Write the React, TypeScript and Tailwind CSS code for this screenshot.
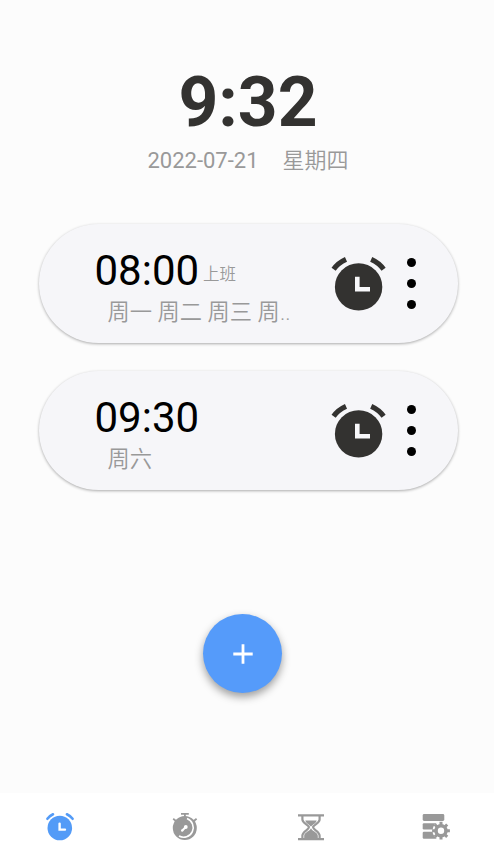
import React from "react";

function AlarmIcon({ className }: { className?: string }) {
  return (
    <svg viewBox="0 0 66 66" className={className}>
      <circle cx="33.6" cy="36.9" r="23.7" fill="currentColor" />
      <path d="M8.6 19.3Q13 13 21 9.4" fill="none" stroke="currentColor" strokeWidth="5" />
      <path d="M46.2 9.4Q54.2 13 58.6 19.3" fill="none" stroke="currentColor" strokeWidth="5" />
      <path d="M30 26.8h4.6v10.3H45v4.4H30z" fill="#f8f8fa" />
    </svg>
  );
}

function NavAlarmIcon() {
  return (
    <svg viewBox="0 0 30 30" className="h-[30px] w-[30px]" fill="none">
      <circle cx="14.8" cy="17" r="12.3" fill="#539bf7" />
      <path d="M2.4 7.8Q4.8 4.8 8 3.3M21.9 3.3Q25.2 4.8 27.6 7.8" stroke="#539bf7" strokeWidth="2.6" strokeLinecap="round" />
      <path d="M14.6 12.6v6h5.4" stroke="#fff" strokeWidth="2.4" strokeLinecap="round" />
    </svg>
  );
}

function StopwatchIcon() {
  return (
    <svg viewBox="0 0 30 30" className="h-[30px] w-[30px]" fill="none">
      <circle cx="14.8" cy="17" r="12" fill="#999" />
      <path d="M11 2.8h7.8M14.9 3v4M3.2 7.8l3.4 2.7M26.6 7.8l-3.4 2.7" stroke="#999" strokeWidth="1.8" />
      <path d="M17 7.6A9.6 9.6 0 1 1 9 25" stroke="#fff" strokeWidth="1.6" />
      <path d="M16 15.8l-3.5 3.4" stroke="#fff" strokeWidth="2" />
      <circle cx="15.8" cy="16" r="1.9" fill="#fff" />
      <circle cx="12.2" cy="19.5" r="1.2" fill="#fff" />
    </svg>
  );
}

function HourglassIcon() {
  return (
    <svg viewBox="0 0 30 30" className="h-[30px] w-[30px]" fill="none">
      <path d="M2 4.3h26M2 28.2h26" stroke="#999" strokeWidth="2.2" />
      <path d="M6.4 4.6v4c0 4 6.5 5.2 6.5 7.7s-6.5 4-6.5 8.3v3M23.6 4.6v4c0 4-6.5 5.2-6.5 7.7s6.5 4 6.5 8.3v3" stroke="#999" strokeWidth="2.2" />
      <path d="M9.3 9.4h11.4c-.8 3-4.2 4-5.7 6.2-1.5-2.2-4.9-3.2-5.7-6.2zM15 17.2c1 3 6.8 4 6.8 7.6V28H8.2v-3.2c0-3.6 5.8-4.6 6.8-7.6z" fill="#999" />
    </svg>
  );
}

function SettingsIcon() {
  return (
    <svg viewBox="0 0 30 30" className="h-[30px] w-[30px]" fill="none">
      <g fill="#999">
        <rect x="1.7" y="3" width="21.6" height="7" rx="1.4" />
        <rect x="1.7" y="12.2" width="14" height="6.3" rx="1.2" />
        <rect x="1.7" y="20.8" width="14" height="7" rx="1.2" />
      </g>
      <circle cx="20" cy="19.7" r="8.6" fill="#fff" />
      <circle cx="20" cy="19.7" r="5" stroke="#999" strokeWidth="3.6" />
      <path
        d="M20 14v-3.2M20 25.4v3.2M14.3 19.7h-3.2M25.7 19.7h3.2M16 15.7l-2.2-2.2M24 15.7l2.2-2.2M16 23.7l-2.2 2.2M24 23.7l2.2 2.2"
        stroke="#999"
        strokeWidth="3"
      />
    </svg>
  );
}

function AlarmCard({ time, label, days }: { time: string; label?: string; days: string }) {
  return (
    <article className="flex h-[119px] w-[419px] rounded-full bg-[#f6f6f9] shadow-[0_1px_3px_rgba(0,0,0,0.32)]">
      <div className="ml-[56px] w-[230px] pt-[22px]">
        <div className="flex h-[50px] items-start whitespace-nowrap">
          <span className="text-[42px] leading-[50px] text-black">{time}</span>
          {label && <span className="mt-[19px] ml-[4px] text-[16.5px] leading-5 font-[350] text-[#999]">{label}</span>}
        </div>
        <p className="ml-[13px] text-[22.3px] leading-[33px] font-[350] whitespace-nowrap text-[#999]">{days}</p>
      </div>
      <AlarmIcon className="mt-[26px] h-[66px] w-[66px] shrink-0 text-[#333230]" />
      <button aria-label="更多" className="mt-[34px] ml-[16px] flex h-[51px] w-[9px] flex-col justify-between">
        <span className="h-[9px] w-[9px] rounded-full bg-black" />
        <span className="h-[9px] w-[9px] rounded-full bg-black" />
        <span className="h-[9px] w-[9px] rounded-full bg-black" />
      </button>
    </article>
  );
}

export default function App() {
  return (
    <div className="flex h-[850px] w-[494px] flex-col overflow-hidden bg-[#fcfcfc] font-[Roboto,'Noto_Sans_CJK_SC',sans-serif]">
      <header className="flex h-[224px] flex-col items-center pt-[62px] pl-[2px]">
        <h1 className="text-[69.5px] leading-[82px] font-bold text-[#333230]">9:32</h1>
        <div className="flex items-baseline gap-[24px] text-[22px] leading-[33px] text-[#999]">
          <span>2022-07-21</span>
          <span className="font-[350]">星期四</span>
        </div>
      </header>
      <main className="flex flex-1 flex-col items-center">
        <div className="flex flex-col gap-[28px] pl-[2px]">
          <AlarmCard time="08:00" label="上班" days="周一 周二 周三 周.." />
          <AlarmCard time="09:30" days="周六" />
        </div>
        <button
          aria-label="添加"
          className="mt-[124px] mr-[9px] flex h-[79px] w-[79px] items-center justify-center rounded-full bg-[#559bfa] shadow-[0_4px_8px_rgba(0,0,0,0.38)]"
        >
          <svg viewBox="0 0 20 20" className="h-5 w-5" stroke="#fff" strokeWidth="2.8">
            <path d="M10 .3v19.4M.3 10h19.4" />
          </svg>
        </button>
      </main>
      <nav className="flex h-[57px] shrink-0 bg-white pt-[18px] pl-[45px]">
        <div className="w-[125px]"><NavAlarmIcon /></div>
        <div className="w-[126px]"><StopwatchIcon /></div>
        <div className="w-[125px]"><HourglassIcon /></div>
        <div><SettingsIcon /></div>
      </nav>
    </div>
  );
}
